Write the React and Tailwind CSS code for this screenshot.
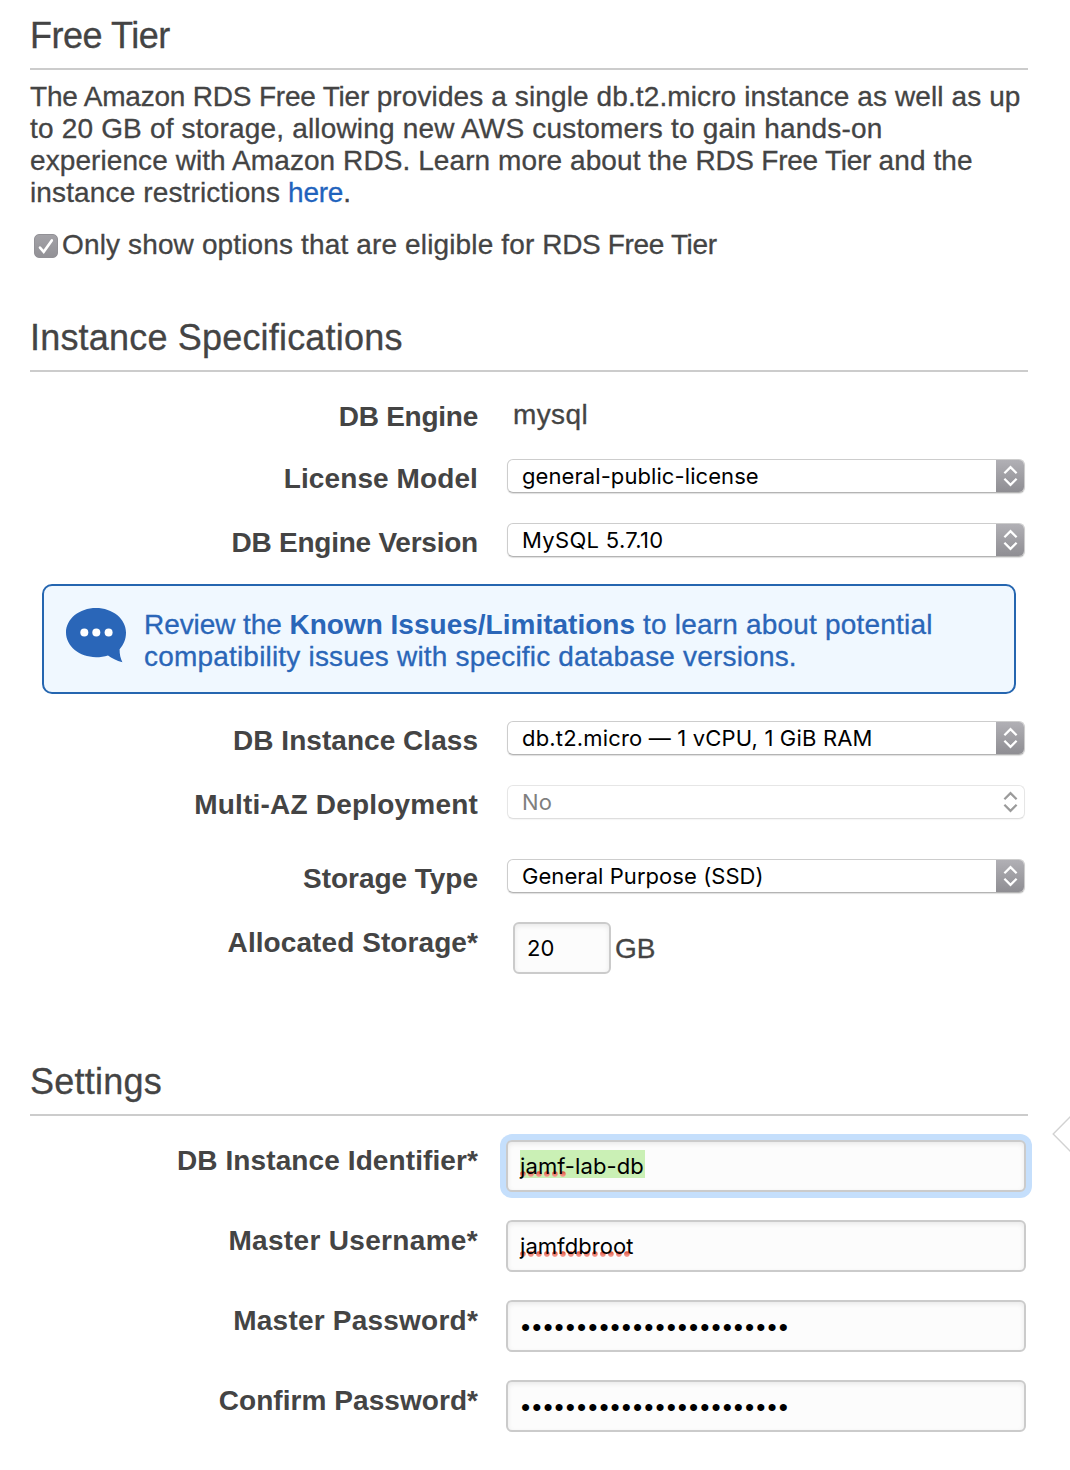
const SANS = "font-['Liberation_Sans',sans-serif]";
const CONTROL = "font-['Inter','Liberation_Sans',sans-serif]";
const STROKE = "[-webkit-text-stroke:0.3px_currentColor]";

function SectionTitle({ children, className = "" }) {
  return (
    <h2 className={`h-[54px] border-b-2 border-[#cccccc] text-4xl font-normal whitespace-nowrap ${STROKE} ${className}`}>
      {children}
    </h2>
  );
}

function Row({ label, labelClass = "", className = "", children }) {
  return (
    <div className={`flex items-start ${className}`}>
      <div className={`mt-[5px] w-[448px] shrink-0 text-right text-[28px] leading-8 font-bold whitespace-nowrap ${labelClass}`}>
        {label}
      </div>
      {children}
    </div>
  );
}

function Chevrons({ color }) {
  return (
    <svg width="15" height="22" viewBox="0 0 15 22" fill="none" stroke={color} strokeWidth="2.3">
      <path d="M1.4 8.2 L7.5 2.2 L13.6 8.2" />
      <path d="M1.4 13.8 L7.5 19.8 L13.6 13.8" />
    </svg>
  );
}

function Select({ value, textClass = "", disabled = false }) {
  return (
    <div
      className={`mt-px ml-[29px] flex h-[34px] w-[518px] overflow-hidden rounded-[6px] border bg-white ${CONTROL} ${
        disabled
          ? "border-[#e6e6e6] border-b-[#dedede] text-[#7f7f7f] shadow-[0_1px_1px_rgba(0,0,0,0.04)]"
          : "border-[#cdcdcd] border-b-[#b4b4b4] text-black shadow-[0_1px_1px_rgba(0,0,0,0.13)]"
      }`}
    >
      <span className={`flex-1 pl-3.5 text-[22px] leading-8 whitespace-nowrap ${textClass}`}>{value}</span>
      <span
        className={`-my-px -mr-px flex h-[34px] w-[29px] items-center justify-center ${
          disabled ? "" : "rounded-r-[6px] border-b border-[#838287] bg-linear-to-b from-[#b2b1b6] to-[#8f8e93]"
        }`}
      >
        <Chevrons color={disabled ? "#9b9b9b" : "#ffffff"} />
      </span>
    </div>
  );
}

function Field({ className = "", children }) {
  return (
    <div
      className={`flex h-[52px] items-start rounded-[6px] border-2 border-[#cbcbcb] bg-[#fcfcfc] pt-2 pl-3 text-[22px] text-black shadow-[inset_0_2px_5px_rgba(0,0,0,0.08)] ${CONTROL} ${className}`}
    >
      {children}
    </div>
  );
}

function SpellDots({ count }) {
  return (
    <svg className="absolute top-[21px] left-0" width={count * 8} height="7" viewBox={`0 0 ${count * 8} 7`}>
      <defs>
        <linearGradient id={`dots${count}`} x1="0" y1="0" x2="0" y2="1">
          <stop offset="0" stopColor="#dc4a35" />
          <stop offset="1" stopColor="#f9a9a0" />
        </linearGradient>
      </defs>
      {Array.from({ length: count }, (_, i) => (
        <circle key={i} cx={2.9 + i * 8} cy="3.1" r="2.8" fill={`url(#dots${count})`} />
      ))}
    </svg>
  );
}

function Bullets() {
  return (
    <span className="mt-px ml-px font-['Liberation_Sans',sans-serif] text-[26px] leading-8 tracking-[2.1px]">
      {"•".repeat(24)}
    </span>
  );
}

export default function App() {
  return (
    <div className={`relative h-[1470px] w-[1070px] overflow-hidden bg-white pt-4 pl-[30px] text-[#444444] ${SANS}`}>
      <div className="w-[998px]">
        <SectionTitle className="tracking-[-0.46px]">Free Tier</SectionTitle>
        <p className={`mt-[11px] text-[28px] leading-8 whitespace-nowrap ${STROKE}`}>
          <span className="block tracking-[0.11px]">
            <span className="tracking-[-0.2px]">The Amazon RDS Free Tier </span>
            provides a single db.t2.micro instance as well as up
          </span>
          <span className="block tracking-[0.18px]">to 20 GB of storage, allowing new AWS customers to gain hands-on</span>
          <span className="block tracking-[0.08px]">
            experience with Amazon RDS. Learn more about the{" "}
            <span className="tracking-[-0.25px]">RDS Free Tier </span>
            and the
          </span>
          <span className="block tracking-[0.13px]">
            instance restrictions <a className="tracking-[-0.25px] text-[#1f63bd]">here</a>.
          </span>
        </p>
        <div className="mt-[19px] flex h-8 pl-1">
          <span className="mt-1.5 flex size-6 items-center justify-center rounded-[5px] border border-[#929196] bg-linear-to-b from-[#a3a2a7] to-[#929196]">
            <svg width="22" height="22" viewBox="0 0 22 22" fill="none" stroke="#fff" strokeWidth="2.6" strokeLinecap="round">
              <path d="M5 12.6 L8.7 16.8 L16.8 5.4" />
            </svg>
          </span>
          <span className={`mt-px ml-1 text-[28px] leading-8 tracking-[0.14px] whitespace-nowrap ${STROKE}`}>
            Only show options that are eligible for <span className="tracking-[-0.35px]">RDS Free Tier</span>
          </span>
        </div>

        <SectionTitle className="mt-[58px] tracking-[0.19px]">Instance Specifications</SectionTitle>
        <div className="mt-[27px] flex h-[59px] items-start text-[28px] leading-8 whitespace-nowrap">
          <div className="mt-0.5 w-[448px] text-right font-bold tracking-[-0.25px]">DB Engine</div>
          <div className={`ml-[35px] tracking-[0.4px] ${STROKE}`}>mysql</div>
        </div>
        <Row label="License Model" labelClass="tracking-[0.1px]" className="h-16">
          <Select value="general-public-license" textClass="tracking-[0.08px]" />
        </Row>
        <Row label="DB Engine Version" labelClass="tracking-[-0.23px]" className="h-[62px]">
          <Select value="MySQL 5.7.10" textClass="tracking-[0.32px]" />
        </Row>

        <div className="mr-3 ml-3 flex h-[110px] rounded-[10px] border-2 border-[#2566b0] bg-[#f0f8ff] pt-[22px] pl-[22px] text-[#2a66b8]">
          <svg className="shrink-0" width="62" height="56" viewBox="0 0 62 56">
            <path
              d="M30 0 C46.5 0 60 10.8 60 24.6 C60 31.5 57.5 37 53.6 41.2 C53.5 46 54.5 50.5 56.4 54.2 C50.5 52.5 45.8 50 42 47.4 C38.4 48.6 34.3 49.2 30 49.2 C13.4 49.2 0 38.2 0 24.6 C0 10.8 13.4 0 30 0 Z"
              fill="#2a66b8"
            />
            <circle cx="18.3" cy="24.6" r="4" fill="#fff" />
            <circle cx="30.3" cy="24.6" r="4" fill="#fff" />
            <circle cx="42.6" cy="24.6" r="4" fill="#fff" />
          </svg>
          <p className={`mt-px ml-4 text-[28px] leading-8 whitespace-nowrap ${STROKE}`}>
            <span className="block tracking-[0.2px]">
              <span className="tracking-[-0.08px]">Review the </span>
              <b className="tracking-[0.01px] [-webkit-text-stroke:0]">Known Issues/Limitations</b> to learn about potential
            </span>
            <span className="block tracking-[0.19px]">compatibility issues with specific database versions.</span>
          </p>
        </div>

        <Row label="DB Instance Class" labelClass="tracking-[0.04px]" className="mt-[26px] h-16">
          <Select value="db.t2.micro — 1 vCPU, 1 GiB RAM" textClass="tracking-[0.17px]" />
        </Row>
        <Row label="Multi-AZ Deployment" labelClass="tracking-[0.2px]" className="h-[74px]">
          <Select value="No" textClass="tracking-[0.2px]" disabled />
        </Row>
        <Row label="Storage Type" labelClass="tracking-[-0.03px]" className="h-16">
          <Select value="General Purpose (SSD)" textClass="tracking-[0.06px]" />
        </Row>
        <Row label="Allocated Storage*" labelClass="tracking-[0.08px]" className="h-[52px]">
          <Field className="ml-[35px] w-[98px]">
            <span className="leading-8">20</span>
          </Field>
          <span className={`mt-[11px] ml-1 text-[28px] leading-8 ${STROKE}`}>GB</span>
        </Row>

        <SectionTitle className="mt-[88px] tracking-[0.25px]">Settings</SectionTitle>
        <Row label="DB Instance Identifier*" labelClass="tracking-[0.1px]" className="mt-6 h-20">
          <Field className="ml-7 w-[520px] ring-6 ring-[#c5dffc]">
            <span className="relative h-7 bg-[#caf0b5] pr-px leading-8 tracking-[0.1px]">
              <SpellDots count={6} />
              <span className="relative">jamf-lab-db</span>
            </span>
          </Field>
        </Row>
        <Row label="Master Username*" labelClass="tracking-[0.33px]" className="h-20">
          <Field className="ml-7 w-[520px]">
            <span className="relative h-7 leading-8 tracking-[0.05px]">
              <SpellDots count={14} />
              <span className="relative">jamfdbroot</span>
            </span>
          </Field>
        </Row>
        <Row label="Master Password*" labelClass="tracking-[0.22px]" className="h-20">
          <Field className="ml-7 w-[520px]">
            <Bullets />
          </Field>
        </Row>
        <Row label="Confirm Password*" labelClass="tracking-[0.06px]" className="h-20">
          <Field className="ml-7 w-[520px]">
            <Bullets />
          </Field>
        </Row>
      </div>

      <svg className="absolute top-[1116px] right-0" width="18" height="36" viewBox="0 0 18 36" fill="none" stroke="#d2d2d2" strokeWidth="1.4">
        <path d="M18.5 0.6 L1.2 18 L18.5 35.4" />
      </svg>
    </div>
  );
}
